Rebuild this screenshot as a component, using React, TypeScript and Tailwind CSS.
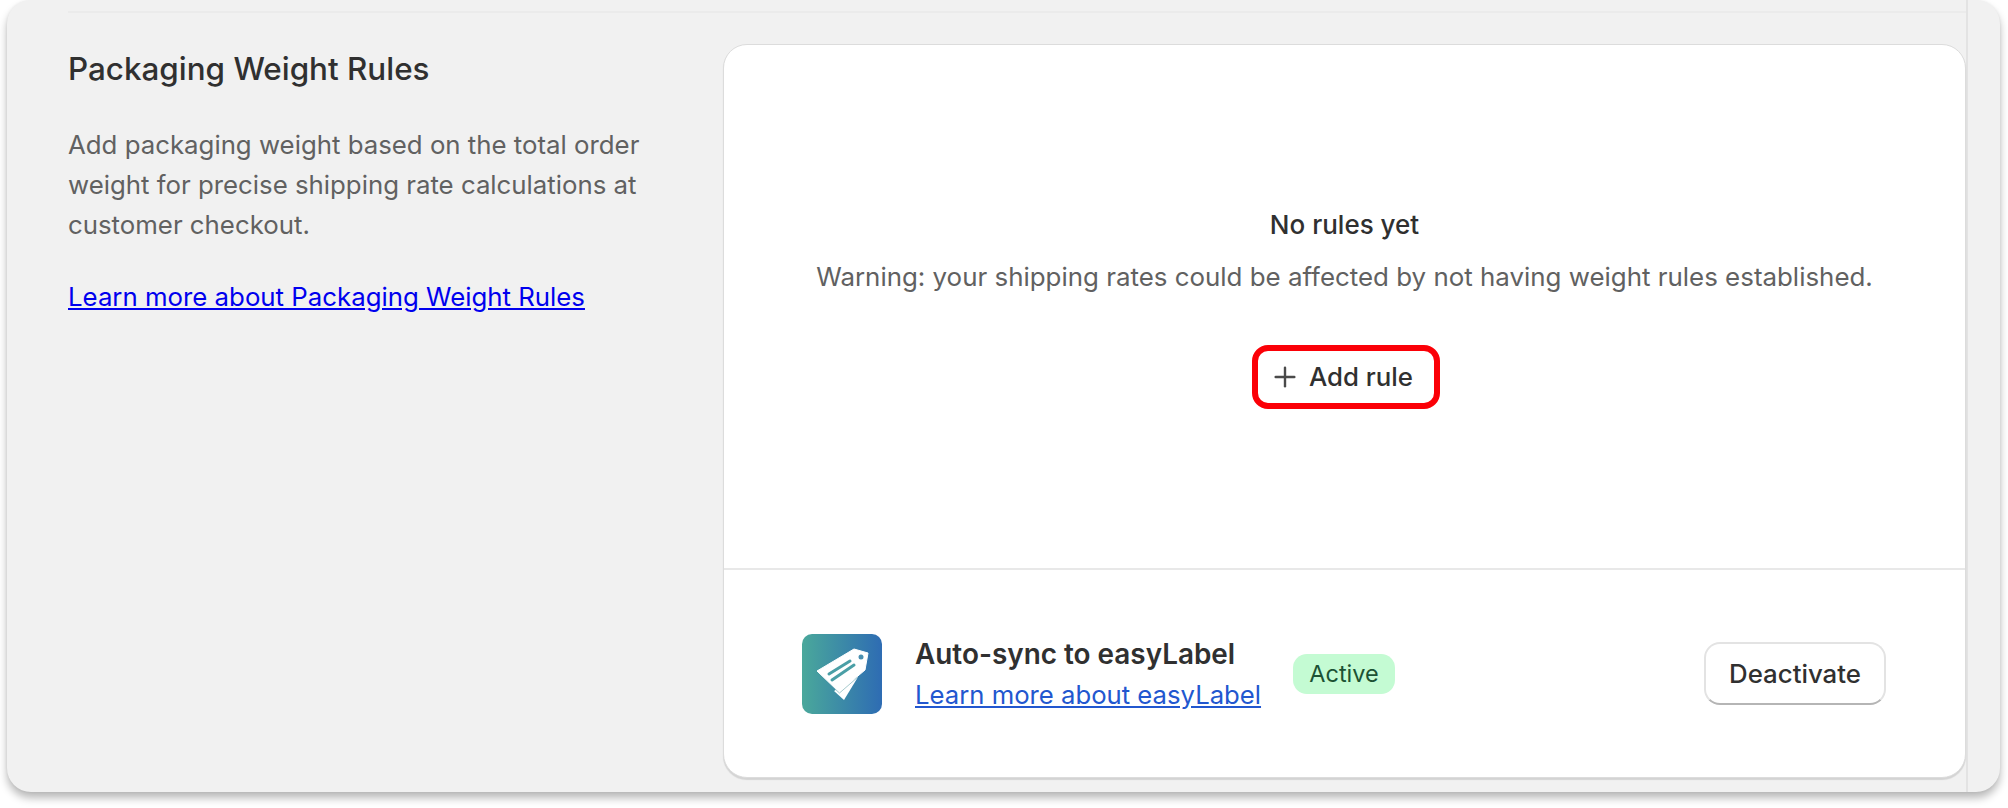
import React from 'react';
import { Plus } from 'lucide-react';

const EasyLabelIcon: React.FC = () => (
  <svg width="80" height="80" viewBox="0 0 80 80" className="shrink-0">
    <defs>
      <linearGradient id="easylabel" x1="0" y1="0" x2="1" y2="0">
        <stop offset="0" stopColor="#4aa89b" />
        <stop offset="1" stopColor="#2e6cb3" />
      </linearGradient>
    </defs>
    <rect width="80" height="80" rx="10" fill="url(#easylabel)" />
    <path d="M32 57 L42 66 L56 43 Z" fill="#fff" />
    <path d="M15 37 L52 15 L66 19 L63 36 L37 58 Z" fill="#fff" strokeLinejoin="round" stroke="#fff" strokeWidth="1" />
    <path d="M33 55 L37.5 59 L56 43" fill="none" stroke="#8fbcc0" strokeWidth="0.8" />
    <path d="M27 40 L48 27 M30 46 L52 31" stroke="#4a9fa6" strokeWidth="3" strokeLinecap="round" />
    <circle cx="59" cy="23" r="2.5" fill="#4a8fb0" />
  </svg>
);

export default function App() {
  return (
    <div className="w-[2008px] h-[808px] bg-white overflow-hidden font-['Inter',sans-serif] antialiased">
      <div className="ml-[7px] w-[1993px] h-[792px] flex rounded-[24px] bg-[#f1f1f1] shadow-[0_6px_8px_rgba(0,0,0,0.28),0_0_3px_rgba(0,0,0,0.06)]">
        <div className="w-[1961px] h-full pt-[11px] pl-[61px] border-r-2 border-[#e3e3e3]">
          <div className="border-t-2 border-[#ebebeb] pt-[31px] flex">
            <div className="w-[655px] shrink-0">
              <h2 className="mt-[5px] text-[31.4px] leading-[40px] font-medium text-[#303030]">Packaging Weight Rules</h2>
              <p className="mt-[36px] w-[600px] text-[25.8px] leading-[40px] text-[#616161]">
                Add packaging weight based on the total order weight for precise shipping rate calculations at customer checkout.
              </p>
              <a className="block mt-[32px] text-[25.8px] leading-[40px] text-[#0000ee] underline">Learn more about Packaging Weight Rules</a>
            </div>
            <div className="w-[1243px] h-[734px] shrink-0 flex flex-col rounded-[24px] bg-white border border-[#dcdcdc] shadow-[0_2px_1px_rgba(0,0,0,0.12)]">
              <div className="h-[525px] border-b-2 border-[#e8e8e8] flex flex-col items-center pt-[160px]">
                <div className="text-[26px] leading-[40px] font-medium text-[#303030]">No rules yet</div>
                <div className="mt-[12px] text-[25.9px] leading-[40px] text-[#616161]">Warning: your shipping rates could be affected by not having weight rules established.</div>
                <button className="mt-[48px] ml-[3px] w-[188px] h-[64px] flex items-center justify-start pl-[11px] gap-[8px] rounded-[16px] border-[6px] border-[#fb0007] text-[25.8px] font-medium text-[#303030]">
                  <Plus size={32} strokeWidth={1.8} className="text-[#4a4a4a]" />
                  Add rule
                </button>
              </div>
              <div className="flex-1 flex items-center pl-[78px] pr-[79px]">
                <EasyLabelIcon />
                <div className="ml-[33px] flex flex-col pt-[1px]">
                  <div className="text-[27.9px] leading-[38px] font-semibold text-[#303030]">Auto-sync to easyLabel</div>
                  <a className="mt-[3px] text-[25.7px] leading-[38px] text-[#2257cf] underline">Learn more about easyLabel</a>
                </div>
                <span className="ml-[32px] pt-[1px] w-[102px] h-[40px] flex items-center justify-center rounded-[14px] bg-[#c4fbd3] text-[23.5px] text-[#1c5233]">Active</span>
                <button className="ml-auto pt-[2px] w-[182px] h-[63px] rounded-[16px] bg-white border-2 border-[#e3e3e3] border-b-[#b5b5b5] text-[25.8px] font-medium text-[#303030]">Deactivate</button>
              </div>
            </div>
          </div>
        </div>
      </div>
    </div>
  );
}
